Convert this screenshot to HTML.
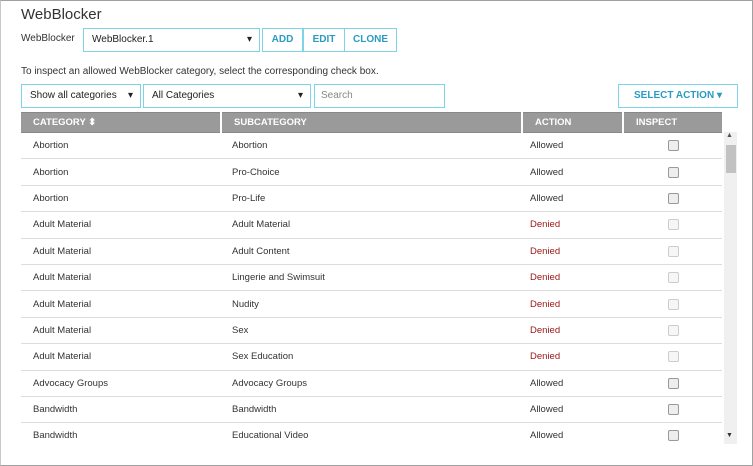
<!DOCTYPE html><html><head><style>
body{margin:0;width:753px;height:466px;overflow:hidden;font-family:"Liberation Sans",sans-serif;background:#fff}
.frame{position:absolute;left:0;top:0;width:751px;height:464px;border:1px solid #a0a0a0;border-left-color:#c8c8c8}
.a{position:absolute}
h1{position:absolute;left:21px;top:6px;margin:0;font-weight:normal;font-size:15px;color:#333}
.box{position:absolute;border:1px solid #7fd3e6;box-sizing:border-box;background:#fff;font-size:10px;color:#222;line-height:22px}
.btn{color:#2a9cc0;font-weight:bold;font-size:10px;text-align:center}
.sel{padding-left:8px}
.arr:after{content:"▾";position:absolute;right:7px;top:0;font-size:10px}
table{position:absolute;left:21px;top:112px;border-collapse:collapse;width:701px;font-size:9.5px;color:#333;table-layout:fixed}
th{background:#9a9a9a;color:#fff;text-align:left;height:19px;padding:0 0 0 12px;font-size:9.5px;border-left:2px solid #fff;border-top:1px solid #888;border-bottom:1px solid #888}
th:first-child{border-left:none}
td{height:25.4px;border-bottom:1px solid #ddd;padding:0 0 0 12px}
td:nth-child(2){padding-left:11px}
td:nth-child(3){padding-left:8px}
.d{color:#9a1515}
.cb{display:inline-block;width:9px;height:9px;border:1px solid #999;border-radius:2px;background:#eee;margin-left:33px;vertical-align:middle}
.cb.g{border-color:#ccc;background:#f6f6f6}
</style></head><body>
<div class="frame"></div>
<h1>WebBlocker</h1>
<div class="a" style="left:21px;top:33px;font-size:10px;color:#333">WebBlocker</div>
<div class="box sel arr" style="left:83px;top:28px;width:177px;height:24px">WebBlocker.1</div>
<div class="box btn" style="left:262px;top:28px;width:41px;height:24px">ADD</div>
<div class="box btn" style="left:303px;top:28px;width:42px;height:24px">EDIT</div>
<div class="box btn" style="left:344px;top:28px;width:53px;height:24px">CLONE</div>
<div class="a" style="left:21px;top:66px;font-size:10px;color:#333">To inspect an allowed WebBlocker category, select the corresponding check box.</div>
<div class="box sel arr" style="left:21px;top:84px;width:120px;height:24px">Show all categories</div>
<div class="box sel arr" style="left:143px;top:84px;width:168px;height:24px">All Categories</div>
<div class="box sel" style="left:314px;top:84px;width:131px;height:24px;color:#888;padding-left:6px">Search</div>
<div class="box btn" style="left:618px;top:84px;width:120px;height:24px">SELECT ACTION ▾</div>
<table>
<colgroup><col style="width:200px"><col style="width:301px"><col style="width:101px"><col style="width:99px"></colgroup>
<tr><th>CATEGORY ⬍</th><th>SUBCATEGORY</th><th>ACTION</th><th>INSPECT</th></tr>
<tr><td>Abortion</td><td>Abortion</td><td>Allowed</td><td><span class="cb"></span></td></tr>
<tr><td>Abortion</td><td>Pro-Choice</td><td>Allowed</td><td><span class="cb"></span></td></tr>
<tr><td>Abortion</td><td>Pro-Life</td><td>Allowed</td><td><span class="cb"></span></td></tr>
<tr><td>Adult Material</td><td>Adult Material</td><td class="d">Denied</td><td><span class="cb g"></span></td></tr>
<tr><td>Adult Material</td><td>Adult Content</td><td class="d">Denied</td><td><span class="cb g"></span></td></tr>
<tr><td>Adult Material</td><td>Lingerie and Swimsuit</td><td class="d">Denied</td><td><span class="cb g"></span></td></tr>
<tr><td>Adult Material</td><td>Nudity</td><td class="d">Denied</td><td><span class="cb g"></span></td></tr>
<tr><td>Adult Material</td><td>Sex</td><td class="d">Denied</td><td><span class="cb g"></span></td></tr>
<tr><td>Adult Material</td><td>Sex Education</td><td class="d">Denied</td><td><span class="cb g"></span></td></tr>
<tr><td>Advocacy Groups</td><td>Advocacy Groups</td><td>Allowed</td><td><span class="cb"></span></td></tr>
<tr><td>Bandwidth</td><td>Bandwidth</td><td>Allowed</td><td><span class="cb"></span></td></tr>
<tr><td style="border:none">Bandwidth</td><td style="border:none">Educational Video</td><td style="border:none">Allowed</td><td style="border:none"><span class="cb"></span></td></tr>
</table>
<div class="a" style="left:724px;top:132px;width:13px;height:312px;background:#f0f0f0"></div>
<div class="a" style="left:726px;top:145px;width:10px;height:28px;background:#c2c2c2"></div>
<div class="a" style="left:726px;top:132px;font-size:7px;color:#555">▲</div>
<div class="a" style="left:726px;top:432px;font-size:7px;color:#333">▼</div>
</body></html>
